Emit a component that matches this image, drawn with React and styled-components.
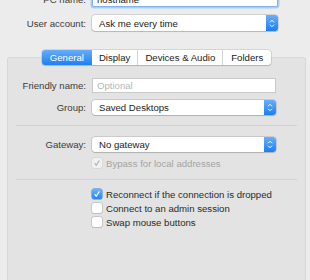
import React from "react";
import styled, { createGlobalStyle } from "styled-components";

const GlobalStyle = createGlobalStyle`
  html, body {
    margin: 0;
    padding: 0;
    background: #ececec;
  }
  body {
    font-family: "Liberation Sans", Arial, sans-serif;
    font-size: 9.6px;
    color: #333;
  }
`;

const Window = styled.div`
  width: 310px;
  height: 280px;
  overflow: hidden;
  background: #ececec;
  display: flex;
  flex-direction: column;
`;

const FormGrid = styled.div`
  display: grid;
  grid-template-columns: ${(p) => p.labelWidth}px ${(p) => p.controlWidth}px;
  column-gap: 6px;
  row-gap: ${(p) => p.rowGap}px;
  align-items: center;
  margin-top: ${(p) => p.top || 0}px;
`;

const Label = styled.label`
  text-align: right;
  color: #3b3b3b;
  white-space: nowrap;
`;

const TextField = styled.div`
  height: 15px;
  box-sizing: border-box;
  background: #fff;
  border: 1px solid ${(p) => (p.focused ? "#80b3ef" : "#c9c9c9")};
  box-shadow: ${(p) => (p.focused ? "0 0 0 1.5px #a9cbf5" : "none")};
  border-radius: ${(p) => (p.focused ? "2px" : "0")};
  padding: 0 4px;
  display: flex;
  align-items: center;
  color: ${(p) => (p.placeholder ? "#b6b6b6" : "#222")};
  height: ${(p) => (p.tall ? 16 : 15)}px;
`;

const Popup = styled.div`
  position: relative;
  height: ${(p) => (p.tall ? 16 : 15)}px;
  box-sizing: border-box;
  background: #fff;
  border-radius: 3px;
  box-shadow: 0 0 0 0.5px rgba(0, 0, 0, 0.22), 0 1px 1px rgba(0, 0, 0, 0.12);
  padding-left: 7px;
  display: flex;
  align-items: center;
  color: #222;
`;

const Stepper = styled.span`
  position: absolute;
  top: 0;
  right: 0;
  bottom: 0;
  width: 12px;
  border-radius: 0 3px 3px 0;
  background: linear-gradient(#68aff8, #1b7ff5);
  display: flex;
  align-items: center;
  justify-content: center;
`;

const TabArea = styled.div`
  display: flex;
  flex-direction: column;
  flex: 1;
  margin: 19px 4px 0 7px;
`;

const TabBar = styled.div`
  position: relative;
  z-index: 1;
  align-self: center;
  display: flex;
  height: 15px;
  background: #fff;
  border-radius: 3px;
  box-shadow: 0 0 0 0.5px rgba(0, 0, 0, 0.2), 0 1px 1px rgba(0, 0, 0, 0.12);
  margin-bottom: -8px;
`;

const Tab = styled.div`
  padding: 0 ${(p) => p.pad}px;
  display: flex;
  align-items: center;
  color: ${(p) => (p.active ? "#fff" : "#222")};
  background: ${(p) =>
    p.active ? "linear-gradient(#66adf8, #1c80f5)" : "transparent"};
  border-radius: ${(p) => (p.active ? "3px 0 0 3px" : "0")};
  border-left: ${(p) => (p.first || p.active ? "none" : "1px solid #d4d4d4")};
`;

const Panel = styled.div`
  flex: 1;
  background: #e3e3e3;
  border: 1px solid #d8d8d8;
  border-bottom: none;
  border-radius: 3px 3px 0 0;
  padding-top: 20px;
`;

const Divider = styled.div`
  height: 1px;
  background: #d2d2d2;
  margin: ${(p) => p.above}px 8px ${(p) => p.below}px;
`;

const CheckRow = styled.div`
  grid-column: 2;
  display: flex;
  align-items: center;
  gap: 4px;
  height: 14px;
  color: ${(p) => (p.disabled ? "#a4a4a4" : "#2a2a2a")};
`;

const Box = styled.span`
  width: 10px;
  height: 10px;
  box-sizing: border-box;
  border-radius: 2px;
  display: flex;
  align-items: center;
  justify-content: center;
  background: ${(p) =>
    p.checked && !p.disabled
      ? "linear-gradient(#6db2f8, #2584f6)"
      : p.disabled
      ? "#f1f1f1"
      : "#fff"};
  box-shadow: ${(p) =>
    p.checked && !p.disabled
      ? "0 0 0 0.5px #2b7fe0"
      : p.disabled
      ? "0 0 0 0.5px #cfcfcf"
      : "0 0 0 0.5px #b0b0b0, 0 0.5px 1px rgba(0,0,0,0.1)"};
`;

const ChecksList = styled.div`
  display: grid;
  grid-template-columns: 78px 184px;
  column-gap: 6px;
  margin-top: 7px;
`;

function StepIcon() {
  return (
    <svg width="6" height="9" viewBox="0 0 6 9" fill="none">
      <path d="M1 3.3 L3 1.3 L5 3.3" stroke="#fff" strokeWidth="1" />
      <path d="M1 5.7 L3 7.7 L5 5.7" stroke="#fff" strokeWidth="1" />
    </svg>
  );
}

function Check({ checked, disabled, children }) {
  return (
    <CheckRow disabled={disabled}>
      <Box checked={checked} disabled={disabled}>
        {checked && (
          <svg width="8" height="8" viewBox="0 0 8 8" fill="none">
            <path
              d="M1.6 4.2 L3.2 6.2 L6.4 1.4"
              stroke={disabled ? "#b3b3b3" : "#fff"}
              strokeWidth="1.1"
            />
          </svg>
        )}
      </Box>
      {children}
    </CheckRow>
  );
}

function Select({ value, tall }) {
  return (
    <Popup tall={tall}>
      {value}
      <Stepper>
        <StepIcon />
      </Stepper>
    </Popup>
  );
}

const tabs = [
  { name: "General", pad: 8 },
  { name: "Display", pad: 7 },
  { name: "Devices & Audio", pad: 7 },
  { name: "Folders", pad: 8 },
];

export default function App() {
  return (
    <Window>
      <GlobalStyle />
      <FormGrid labelWidth={86} controlWidth={186} rowGap={8} top={-9}>
        <Label>PC name:</Label>
        <TextField focused tall>
          hostname
        </TextField>
        <Label>User account:</Label>
        <Select value="Ask me every time" tall />
      </FormGrid>

      <TabArea>
        <TabBar>
          {tabs.map((t, i) => (
            <Tab key={t.name} pad={t.pad} active={i === 0} first={i === 0 || i === 1}>
              {t.name}
            </Tab>
          ))}
        </TabBar>
        <Panel>
          <FormGrid labelWidth={78} controlWidth={184} rowGap={7}>
            <Label>Friendly name:</Label>
            <TextField placeholder>Optional</TextField>
            <Label>Group:</Label>
            <Select value="Saved Desktops" />
          </FormGrid>
          <Divider above={10} below={11} />
          <FormGrid labelWidth={78} controlWidth={184} rowGap={4}>
            <Label>Gateway:</Label>
            <Select value="No gateway" />
            <Check checked disabled>
              Bypass for local addresses
            </Check>
          </FormGrid>
          <Divider above={9} below={0} />
          <ChecksList>
            <Check checked>Reconnect if the connection is dropped</Check>
            <Check>Connect to an admin session</Check>
            <Check>Swap mouse buttons</Check>
          </ChecksList>
        </Panel>
      </TabArea>
    </Window>
  );
}
